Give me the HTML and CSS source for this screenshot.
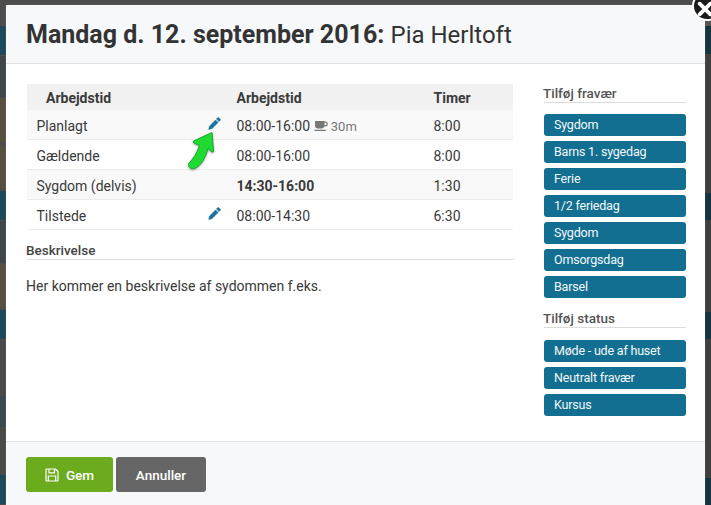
FILE: index.html
```html
<!DOCTYPE html>
<html lang="da">
<head>
<meta charset="utf-8">
<title>Mandag d. 12. september 2016</title>
<link rel="stylesheet" href="styles.css">
</head>
<body>
<div class="backdrop">
  <div class="strip strip-left">
    <div class="bk l-top"></div><div class="bk l-teal"></div><div class="bk l-grey"></div><div class="bk l-brown"></div><div class="bk l-brown"></div><div class="bk l-teal"></div><div class="bk l-grey"></div><div class="bk l-brown"></div><div class="bk l-teal"></div><div class="bk l-grey2"></div><div class="bk l-grey3"></div><div class="bk l-grey4"></div><div class="bk l-teal"></div>
  </div>
  <div class="strip strip-right">
    <div class="bk r-top"></div><div class="bk r-teal"></div><div class="bk r-long"></div><div class="bk r-teal"></div><div class="bk r-mid"></div><div class="bk r-teal"></div><div class="bk r-long"></div><div class="bk r-teal"></div>
  </div>
</div>
<div class="modal">
  <header class="modal-head">
    <h1><strong>Mandag d. 12. september 2016:</strong> <span class="who">Pia Herltoft</span></h1>
  </header>
  <div class="modal-body">
    <main class="content">
      <table class="grid">
        <thead>
          <tr><th class="c1 indent">Arbejdstid</th><th class="c2"></th><th class="c3">Arbejdstid</th><th class="c4">Timer</th></tr>
        </thead>
        <tbody>
          <tr class="alt"><td class="c1">Planlagt</td><td class="c2"><svg class="pen" viewBox="0 0 13 13"><path d="M9.700.7a.8.8 0 0 1 1.100 0l1.500 1.500a.8.8 0 0 1 0 1.100l-1.300 1.300-2.600-2.600zM7.500 2.900l2.600 2.600-6.200 6.200-3.200.8.700-3.300z"/></svg></td><td class="c3">08:00-16:00 <span class="brk"><svg class="cup" viewBox="0 0 14 12"><path d="M1 1h9.500v.5h.8a2.200 2.200 0 0 1 0 5h-1A3 3 0 0 1 7.500 8.500H4A3 3 0 0 1 1 5.500zM10.500 2.700v2.600h.8a1.300 1.300 0 0 0 0-2.600zM0 9.800h12.500l-1 1.200H1z"/></svg> 30m</span></td><td class="c4">8:00</td></tr>
          <tr><td class="c1">Gældende</td><td class="c2"></td><td class="c3">08:00-16:00</td><td class="c4">8:00</td></tr>
          <tr class="alt"><td class="c1">Sygdom (delvis)</td><td class="c2"></td><td class="c3 b">14:30-16:00</td><td class="c4">1:30</td></tr>
          <tr><td class="c1">Tilstede</td><td class="c2"><svg class="pen" viewBox="0 0 13 13"><path d="M9.700.7a.8.8 0 0 1 1.100 0l1.500 1.500a.8.8 0 0 1 0 1.100l-1.300 1.300-2.600-2.600zM7.500 2.900l2.600 2.600-6.200 6.200-3.200.8.700-3.300z"/></svg></td><td class="c3">08:00-14:30</td><td class="c4">6:30</td></tr>
        </tbody>
      </table>
      <h2 class="sec">Beskrivelse</h2>
      <p class="desc">Her kommer en beskrivelse af sydommen f.eks.</p>
    </main>
    <aside class="side">
      <h3 class="side-h">Tilføj fravær</h3>
      <div class="btns">
        <a class="tag">Sygdom</a><a class="tag">Barns 1. sygedag</a><a class="tag">Ferie</a><a class="tag">1/2 feriedag</a><a class="tag">Sygdom</a><a class="tag">Omsorgsdag</a><a class="tag">Barsel</a>
      </div>
      <h3 class="side-h second">Tilføj status</h3>
      <div class="btns">
        <a class="tag">Møde - ude af huset</a><a class="tag">Neutralt fravær</a><a class="tag">Kursus</a>
      </div>
    </aside>
  </div>
  <footer class="modal-foot">
    <button class="btn save"><svg class="disk" viewBox="0 0 14 14"><path d="M1.500 1h9l2.500 2.500v9a.5.5 0 0 1-.5.5h-11a.5.5 0 0 1-.5-.5v-11a.5.5 0 0 1 .5-.5z M4 1.200v3.600h5.500V1.200 M3.300 13V8h7.400v5" fill="none" stroke="currentColor" stroke-width="1.200"/></svg>Gem</button>
    <button class="btn cancel">Annuller</button>
  </footer>
  <svg class="arrow" viewBox="0 0 32 44"><path d="M27 4.500 L8.500 13 Q7.500 14 9 15 L14.500 17.500 C12 25 8 31 3.800 35.500 C2.500 38.500 6 42 9.500 40.500 C16 38 20.500 30 23 20.500 L27 24 Q28.500 24.500 28.500 23 Z" fill="#20da34" stroke="#17a82a" stroke-width="1" stroke-linejoin="round"/></svg>
</div>
<div class="close"><svg viewBox="0 0 12 12"><path d="M2 2l8 8M10 2l-8 8" stroke="#fff" stroke-width="2.800" stroke-linecap="round"/></svg></div>
</body>
</html>
```

FILE: styles.css
```css
* { box-sizing: border-box; }
html, body { margin: 0; height: 100%; }
body {
  position: relative;
  width: 711px;
  height: 505px;
  overflow: hidden;
  background: #4c4c4c;
  font-family: Roboto, "Open Sans", sans-serif;
  color: #3a3a3a;
}
.backdrop { position: absolute; inset: 0; }
.strip { position: absolute; top: 0; bottom: 0; width: 8px; display: flex; flex-direction: column; }
.strip-left { left: 0; }
.strip-right { right: 0; }
.l-top { height: 28px; background: #4d4d4d; }
.l-teal { height: 31px; margin-bottom: 1px; background: #1c4a5b; }
.l-grey { height: 45px; margin-bottom: 1px; background: #3f474a; }
.l-brown { height: 47px; margin-bottom: 3px; background: #55503f; }
.l-grey2 { height: 60px; background: #4a4a48; }
.l-grey3 { height: 34px; margin-bottom: 1px; background: #3d4a4d; }
.l-grey4 { height: 51px; background: #4a4a48; }
.r-top { height: 28px; background: #555; }
.r-teal { height: 29px; background: #14353f; }
.r-long { height: 147px; background: #3f3f3f; }
.r-mid { height: 97px; background: #3f3f3f; }

.modal {
  position: absolute;
  left: 6px;
  top: 5px;
  width: 699px;
  height: 520px;
  background: #fff;
  border-radius: 3px 3px 0 0;
  box-shadow: 0 0 1px rgba(255,255,255,.5);
  display: flex;
  flex-direction: column;
}
.modal-head {
  height: 59px;
  background: #f7f8fa;
  border-bottom: 1px solid #dfe1e3;
  padding: 0 20px;
  display: flex;
  align-items: center;
  flex: none;
}
h1 { margin: 0; font-size: 25px; font-weight: 400; color: #333; white-space: nowrap; }
h1 strong { font-weight: 700; }
.who { font-size: 24px; }
.modal-body {
  flex: none;
  height: 377px;
  padding: 20px 20px 0 21px;
  display: flex;
  gap: 30px;
}
.content { width: 487px; flex: none; }
.grid { width: 486px; border-collapse: separate; border-spacing: 0; table-layout: fixed; font-size: 14px; }
.grid th { height: 26px; background: #f1f1f1; text-align: left; font-weight: 700; padding: 1px 0 0; font-size: 14px; }
.grid td { height: 30px; padding: 2px 0 0; border-bottom: 1px solid #ececec; white-space: nowrap; }
.alt td { background: #f9f9f9; }
.c1 { width: 170px; padding-left: 9.500px !important; }
.indent { padding-left: 19px !important; }
.c2 { width: 39.500px; }
.c3 { width: 197px; }
.b { font-weight: 700; }
.pen { width: 13px; height: 13px; fill: #1a739a; stroke: #1a739a; stroke-width: .5; display: block; margin: -4px 0 0 11px; }
.brk { color: #777; font-size: 13px; }
.cup { width: 14px; height: 12px; fill: #777; vertical-align: -1px; }
.sec { margin: 12px 0 0; font-size: 13.500px; font-weight: 500; border-bottom: 1px solid #dcdcdc; line-height: 17px; color: #444; text-indent: -1px; }
.desc { margin: 16px 0 0; font-size: 14px; line-height: 20px; text-indent: -1px; }
.side { width: 142px; flex: none; }
.side-h { margin: 0 0 11px; font-size: 13.500px; font-weight: 500; line-height: 18px; border-bottom: 1px solid #dcdcdc; color: #555; text-indent: -1px; }
.second { margin: 11px 0 12px; }
.btns { display: flex; flex-direction: column; gap: 5px; }
.tag { display: block; height: 22px; line-height: 21px; background: #126f91; color: #f4f8fa; border-radius: 3px; padding-left: 10px; font-size: 12.500px; letter-spacing: -.2px; white-space: nowrap; }
.modal-foot {
  flex: 1;
  background: #f7f8fa;
  border-top: 1px solid #dfe1e3;
  padding: 15px 20px;
  display: flex;
  gap: 3px;
  align-items: flex-start;
}
.btn { height: 35px; border: 0; border-radius: 3px; color: #fff; font: 500 13.500px Roboto, sans-serif; display: flex; align-items: center; justify-content: center; }
.save { width: 87px; background: #6bab1d; gap: 7px; }
.cancel { width: 90px; background: #666; }
.disk { width: 14px; height: 14px; }
.arrow { position: absolute; left: 179px; top: 123px; width: 32px; height: 44px; filter: drop-shadow(0 1px 1px rgba(0,0,0,.35)); }
.close {
  position: absolute;
  left: 692px;
  top: -9px;
  width: 30px;
  height: 30px;
  border-radius: 50%;
  background: #1b1b1b;
  border: 2px solid #fff;
  display: flex;
  align-items: center;
  justify-content: center;
}
.close svg { width: 16px; height: 16px; margin: 6px 4px 0 0; }
```
